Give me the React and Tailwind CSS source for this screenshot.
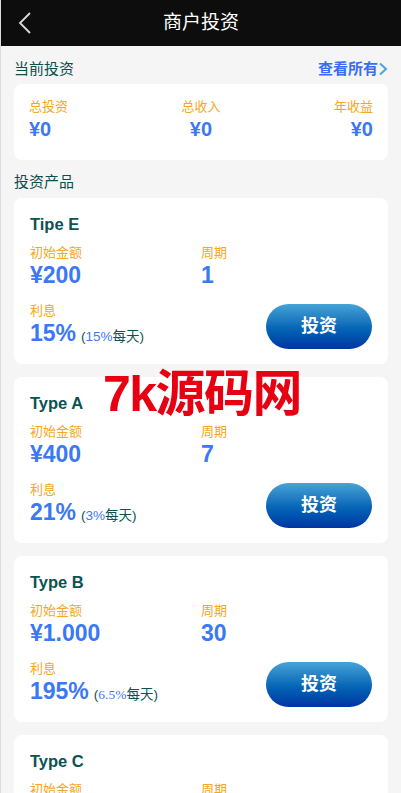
import React from "react";

const products = [
  { name: "Tipe E", amount: "¥200", period: "1", rate: "15%", daily: "15%", serif: false },
  { name: "Type A", amount: "¥400", period: "7", rate: "21%", daily: "3%", serif: false },
  { name: "Type B", amount: "¥1.000", period: "30", rate: "195%", daily: "6.5%", serif: true },
  { name: "Type C", amount: "¥3.000", period: "60", rate: "420%", daily: "7%", serif: false },
];

const sans = "font-['Liberation_Sans','Noto_Sans_CJK_SC',sans-serif]";

function ProductCard({ item }) {
  return (
    <div className="bg-white rounded-lg px-4 pt-[16px] pb-[14px]">
      <div className="text-[16.5px] leading-[20px] font-bold text-[#0b5252]">{item.name}</div>
      <div className="grid grid-cols-2 mt-[10px]">
        <div>
          <div className="text-[13px] leading-[18px] text-[#f5a623]">初始金额</div>
          <div className="text-[23px] leading-[26px] font-bold text-[#3b78f4]">{item.amount}</div>
        </div>
        <div>
          <div className="text-[13px] leading-[18px] text-[#f5a623]">周期</div>
          <div className="text-[23px] leading-[26px] font-bold text-[#3b78f4]">{item.period}</div>
        </div>
      </div>
      <div className="flex items-center justify-between mt-[14px]">
        <div>
          <div className="text-[13px] leading-[18px] text-[#f5a623]">利息</div>
          <div className="flex items-baseline leading-[26px]">
            <span className="text-[23px] font-bold text-[#3b78f4]">{item.rate}</span>
            <span className="ml-[5px] text-[13.5px] text-[#0b5252]">
              (
              <span
                className={
                  item.serif
                    ? "text-[#3b78f4] font-['Liberation_Serif',serif]"
                    : "text-[#3b78f4]"
                }
              >
                {item.daily}
              </span>
              每天)
            </span>
          </div>
        </div>
        <button className="w-[106px] h-[45px] rounded-full bg-gradient-to-b from-[#46a3d6] via-[#0a6ab8] to-[#0234a2] text-white text-[18px] font-bold mt-[1px]">
          投资
        </button>
      </div>
    </div>
  );
}

export default function App() {
  return (
    <div className={`relative w-[401px] min-h-[793px] bg-[#f5f5f5] border-l border-[#dcdcdc] ${sans}`}>
      <div className="h-[46px] bg-[#0d0d0d] flex items-center justify-center relative">
        <svg
          className="absolute left-[17px] top-[12px]"
          width="14"
          height="22"
          viewBox="0 0 14 22"
          fill="none"
        >
          <path d="M12 1 L2 11 L12 21" stroke="#d9d9d9" strokeWidth="1.8" />
        </svg>
        <span className="text-white text-[19px]">商户投资</span>
      </div>

      <div className="px-[13px]">
        <div className="flex items-center justify-between h-[38px] pt-[8px]">
          <span className="text-[15px] text-[#0b4f4f]">当前投资</span>
          <span className="flex items-center text-[15px] font-bold text-[#3a6cf4]">
            查看所有
            <svg width="10" height="14" viewBox="0 0 10 14" fill="none">
              <path d="M2 1.5 L8 7 L2 12.5" stroke="#4aa3e8" strokeWidth="2" />
            </svg>
          </span>
        </div>

        <div className="bg-white rounded-lg h-[76px] px-[15px] pt-[14px] flex justify-between">
          <div>
            <div className="text-[13px] leading-[18px] text-[#f5a623]">总投资</div>
            <div className="text-[20px] leading-[26px] font-bold text-[#3b78f4]">¥0</div>
          </div>
          <div className="text-center">
            <div className="text-[13px] leading-[18px] text-[#f5a623]">总收入</div>
            <div className="text-[20px] leading-[26px] font-bold text-[#3b78f4]">¥0</div>
          </div>
          <div className="text-right">
            <div className="text-[13px] leading-[18px] text-[#f5a623]">年收益</div>
            <div className="text-[20px] leading-[26px] font-bold text-[#3b78f4]">¥0</div>
          </div>
        </div>

        <div className="h-[38px] flex items-center text-[15px] text-[#0b4f4f] pt-[6px]">投资产品</div>

        <div className="flex flex-col gap-[13px] pb-4">
          {products.map((p) => (
            <ProductCard key={p.name} item={p} />
          ))}
        </div>
      </div>

      <div className="absolute left-[102px] top-[367px] text-[50px] leading-[54px] tracking-[-1.5px] font-bold text-[#e60012] font-['Liberation_Sans','Noto_Sans_CJK_SC',sans-serif]">
        7k源码网
      </div>
    </div>
  );
}
